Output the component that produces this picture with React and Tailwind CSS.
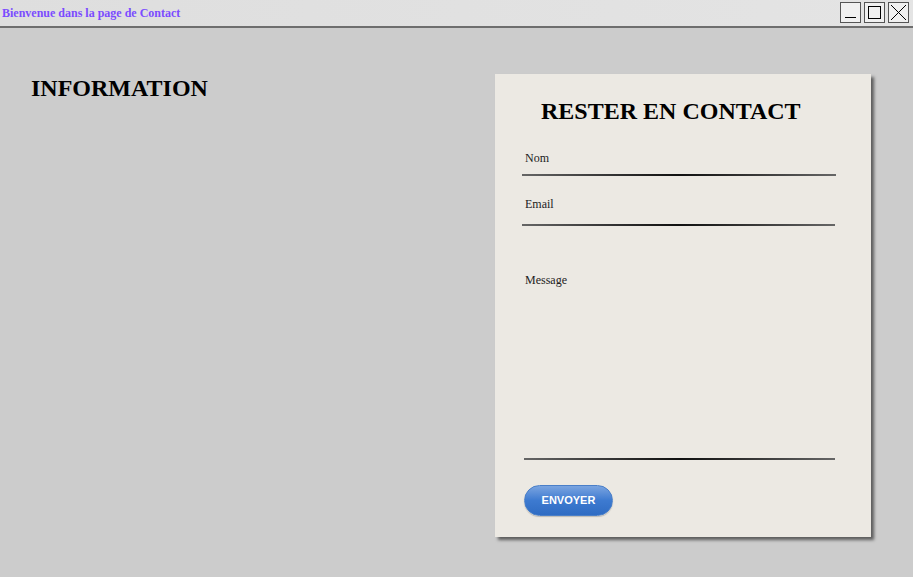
import React from 'react';

const serif = "font-['Liberation_Serif',_'Times_New_Roman',_serif]";

const Field = ({ label, lineClass, wrapClass, labelPad = 'pl-[3px]' }) => (
  <div className={wrapClass}>
    <div className={`${labelPad} text-[12px] leading-[14px] text-[#222]`}>{label}</div>
    <div className={lineClass} />
  </div>
);

export default function App() {
  return (
    <div className={`w-[913px] h-[577px] overflow-hidden bg-[#cccccc] ${serif}`}>
      {/* Window title bar */}
      <div className="h-[28px] flex items-start justify-between bg-gradient-to-r from-[#dedede] to-[#e4e4e4] border-b-2 border-[#6e6e6e]">
        <div className="pl-[2px] pt-[6px] text-[12px] leading-[14px] font-bold text-[#7b4cff]">
          Bienvenue dans la page de Contact
        </div>
        <div className="flex gap-[3px] pt-[2px] pr-[4px]">
          <div className="w-[21px] h-[21px] border border-[#555] bg-[#f0f0f0] flex items-end justify-center pb-[4px]">
            <div className="w-[11px] h-[1px] bg-black" />
          </div>
          <div className="w-[21px] h-[21px] border border-[#555] bg-[#f0f0f0] flex items-center justify-center">
            <div className="w-[13px] h-[13px] border border-black" />
          </div>
          <div className="w-[21px] h-[21px] border border-[#555] bg-[#f0f0f0] flex items-center justify-center">
            <svg width="17" height="17" viewBox="0 0 17 17" stroke="black" strokeWidth="1">
              <path d="M1 1L16 16M16 1L1 16" />
            </svg>
          </div>
        </div>
      </div>

      <div className="flex items-start justify-between pl-[31px] pr-[42px] pt-[46px]">
        <h1 className="text-[24px] leading-[28px] font-bold text-black">INFORMATION</h1>

        {/* Contact card */}
        <div className="w-[376px] h-[463px] bg-[#ece9e3] shadow-[3px_3px_3px_rgba(0,0,0,0.55)] pl-[27px] pr-[35px] pt-[23px]">
          <h2 className="pl-[19px] text-[24px] leading-[28px] font-bold text-black">RESTER EN CONTACT</h2>
          <Field
            label="Nom"
            wrapClass="mt-[26px]"
            lineClass="mt-[9px] h-[2px] w-[314px] bg-gradient-to-r from-[#666] via-[#111] to-[#666]"
          />
          <Field
            label="Email"
            wrapClass="mt-[21px]"
            lineClass="mt-[13px] h-[2px] w-[313px] bg-gradient-to-r from-[#666] via-[#111] to-[#666]"
          />
          <Field
            label="Message"
            labelPad="pl-[1px]"
            wrapClass="mt-[47px] pl-[2px]"
            lineClass="mt-[171px] h-[2px] w-[311px] bg-gradient-to-r from-[#666] via-[#111] to-[#666]"
          />
          <button className="mt-[25px] ml-[2px] w-[89px] h-[31px] rounded-full border border-[#4a7fc8] bg-gradient-to-b from-[#7aa4e0] via-[#3d7ad0] to-[#2f6cc3] text-white text-[11px] font-bold font-['Liberation_Sans',_Arial,_sans-serif] shadow-[0_1px_1px_rgba(0,0,0,0.2)]">
            ENVOYER
          </button>
        </div>
      </div>
    </div>
  );
}
